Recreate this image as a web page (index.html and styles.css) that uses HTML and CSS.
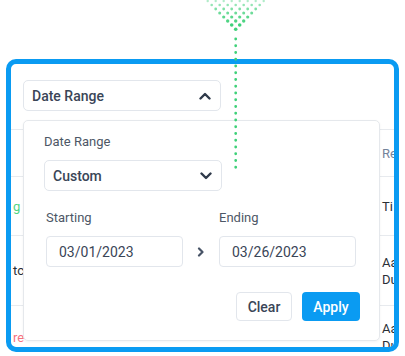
FILE: index.html
```html
<!DOCTYPE html>
<html lang="en">
  <head>
    <meta charset="UTF-8" />
    <title>Date range filter</title>
    <meta name="viewport" content="width=device-width, initial-scale=1.0" />
    <link rel="stylesheet" href="styles.css">
  </head>
  <body>
    <div class="page">
      <svg class="trace" width="405" height="356" viewBox="0 0 405 356" aria-hidden="true">
        <g fill="#3fd179">
          <g opacity="0.4">
            <circle cx="207.7" cy="1" r="1.2" /><circle cx="215.7" cy="1" r="1.2" /><circle cx="223.7" cy="1" r="1.2" /><circle cx="231.7" cy="1" r="1.2" />
            <circle cx="239.7" cy="1" r="1.2" /><circle cx="247.7" cy="1" r="1.2" /><circle cx="255.7" cy="1" r="1.2" /><circle cx="263.7" cy="1" r="1.2" />
          </g>
          <g opacity="0.55">
            <circle cx="211.7" cy="5" r="1.3" /><circle cx="219.7" cy="5" r="1.3" /><circle cx="227.7" cy="5" r="1.3" /><circle cx="235.7" cy="5" r="1.3" />
            <circle cx="243.7" cy="5" r="1.3" /><circle cx="251.7" cy="5" r="1.3" /><circle cx="259.7" cy="5" r="1.3" />
          </g>
          <g opacity="0.66">
            <circle cx="215.7" cy="9" r="1.4" /><circle cx="223.7" cy="9" r="1.4" /><circle cx="231.7" cy="9" r="1.4" />
            <circle cx="239.7" cy="9" r="1.4" /><circle cx="247.7" cy="9" r="1.4" /><circle cx="255.7" cy="9" r="1.4" />
          </g>
          <g opacity="0.76">
            <circle cx="219.7" cy="13" r="1.5" /><circle cx="227.7" cy="13" r="1.5" /><circle cx="235.7" cy="13" r="1.5" />
            <circle cx="243.7" cy="13" r="1.5" /><circle cx="251.7" cy="13" r="1.5" />
          </g>
          <g opacity="0.85">
            <circle cx="223.7" cy="17" r="1.6" /><circle cx="231.7" cy="17" r="1.6" /><circle cx="239.7" cy="17" r="1.6" /><circle cx="247.7" cy="17" r="1.6" />
          </g>
          <g opacity="0.92">
            <circle cx="227.7" cy="21" r="1.7" /><circle cx="235.7" cy="21" r="1.7" /><circle cx="243.7" cy="21" r="1.7" />
          </g>
          <circle cx="231.7" cy="25" r="1.8" /><circle cx="239.7" cy="25" r="1.8" />
          <circle cx="235.7" cy="29.3" r="1.8" />
        </g>
        <line x1="235.7" y1="39" x2="235.7" y2="168" stroke="#3fd179" stroke-width="2.8" stroke-linecap="round" stroke-dasharray="0 6.75" />
      </svg>

      <div class="frame">
        <div class="toolbar">
          <button class="field toggle">
            <span>Date Range</span>
            <svg width="12" height="8" viewBox="0 0 12 8"><path d="M1.5 6.5 6 2l4.5 4.5" fill="none" stroke="#2f3a4a" stroke-width="2.4" stroke-linecap="round" stroke-linejoin="round" /></svg>
          </button>
        </div>

        <div class="table">
          <div class="row head">
            <div class="cell first"></div>
            <div class="cell last muted">Re</div>
          </div>
          <div class="row r1">
            <div class="cell first green">g</div>
            <div class="cell last">Ti</div>
          </div>
          <div class="row r2">
            <div class="cell first">tc</div>
            <div class="cell last">Aa<br>Du</div>
          </div>
          <div class="row r3">
            <div class="cell first red">re</div>
            <div class="cell last">Aa<br>Du</div>
          </div>
        </div>

        <div class="popover">
          <div class="label">Date Range</div>
          <div class="field select">
            <span>Custom</span>
            <svg width="12" height="8" viewBox="0 0 12 8"><path d="M1.5 1.5 6 6l4.5-4.5" fill="none" stroke="#2f3a4a" stroke-width="2.4" stroke-linecap="round" stroke-linejoin="round" /></svg>
          </div>

          <div class="dates">
            <div class="date-group">
              <div class="label">Starting</div>
              <div class="date-input">03/01/2023</div>
            </div>
            <div class="between">
              <svg width="8" height="10" viewBox="0 0 8 10"><path d="M2 1.5 5.5 5 2 8.5" fill="none" stroke="#475366" stroke-width="2.2" stroke-linecap="round" stroke-linejoin="round" /></svg>
            </div>
            <div class="date-group">
              <div class="label">Ending</div>
              <div class="date-input">03/26/2023</div>
            </div>
          </div>

          <div class="actions">
            <button class="btn clear">Clear</button>
            <button class="btn apply">Apply</button>
          </div>
        </div>
      </div>
    </div>
  </body>
</html>
```

FILE: styles.css
```css
body {
  margin: 0;
  background: #fff;
  font-family: Roboto, "Liberation Sans", sans-serif;
  color: #374151;
}

.page {
  position: relative;
  width: 405px;
  height: 356px;
  padding: 59px 6px 0 6px;
  box-sizing: border-box;
}

.trace {
  position: absolute;
  left: 0;
  top: 0;
  z-index: 10;
  pointer-events: none;
}

.frame {
  position: relative;
  height: 293px;
  border: 5px solid #0a9bf2;
  border-radius: 10px;
  box-sizing: border-box;
  overflow: hidden;
  background: #fff;
}

.toolbar {
  height: 66px;
  padding: 16px 12px 0;
  box-sizing: border-box;
  border-bottom: 1px solid #e7eaee;
}

.field {
  display: flex;
  align-items: center;
  justify-content: space-between;
  height: 31px;
  box-sizing: border-box;
  border: 1px solid #e2e6ec;
  border-radius: 5px;
  background: #fff;
  font-family: inherit;
  font-size: 14px;
  font-weight: 500;
  color: #3a4557;
}

.toggle {
  width: 198px;
  padding: 0 9px 0 8px;
  margin: 0;
}

.table .row {
  display: grid;
  grid-template-columns: 371px 1fr;
  align-items: center;
  border-bottom: 1px solid #e7eaee;
  font-size: 13px;
  line-height: 17px;
  color: #2a2f36;
  white-space: nowrap;
}

.row.head { height: 46px; }
.row.r1 { height: 58px; }
.row.r2 { height: 69px; }
.row.r3 { height: 62px; }

.cell.first {
  padding-left: 2px;
}

.muted { color: #74839a; }
.green { color: #4fd483; }
.red { color: #f7727f; }

.popover {
  position: absolute;
  left: 12px;
  top: 56px;
  width: 357px;
  height: 221px;
  box-sizing: border-box;
  padding: 12px 19px 0 20px;
  background: #fff;
  border: 1px solid #e5e8ec;
  border-radius: 5px;
  box-shadow: 0 1px 3px rgba(15, 23, 42, 0.05);
}

.label {
  font-size: 13px;
  line-height: 18px;
  color: #4d5766;
}

.select {
  width: 178px;
  margin-top: 9px;
  padding: 0 9px 0 8px;
}

.dates {
  display: grid;
  grid-template-columns: 137px 36px 137px;
  margin-top: 18px;
  padding-left: 2px;
}

.date-group .label {
  margin-bottom: 9px;
}

.date-input {
  height: 31px;
  box-sizing: border-box;
  padding-left: 12px;
  border: 1px solid #e2e6ec;
  border-radius: 4px;
  display: flex;
  align-items: center;
  font-size: 14px;
  color: #3a4557;
}

.between {
  align-self: end;
  height: 31px;
  display: flex;
  align-items: center;
  justify-content: center;
}

.actions {
  display: flex;
  justify-content: flex-end;
  gap: 10px;
  margin-top: 25px;
}

.btn {
  height: 29px;
  margin: 0;
  padding: 0;
  border-radius: 4px;
  font-family: inherit;
  font-size: 14px;
  font-weight: 500;
}

.clear {
  width: 56px;
  border: 1px solid #e2e6ec;
  background: #fff;
  color: #3a4557;
}

.apply {
  width: 58px;
  border: none;
  background: #0a9bf2;
  color: #fff;
}
```
